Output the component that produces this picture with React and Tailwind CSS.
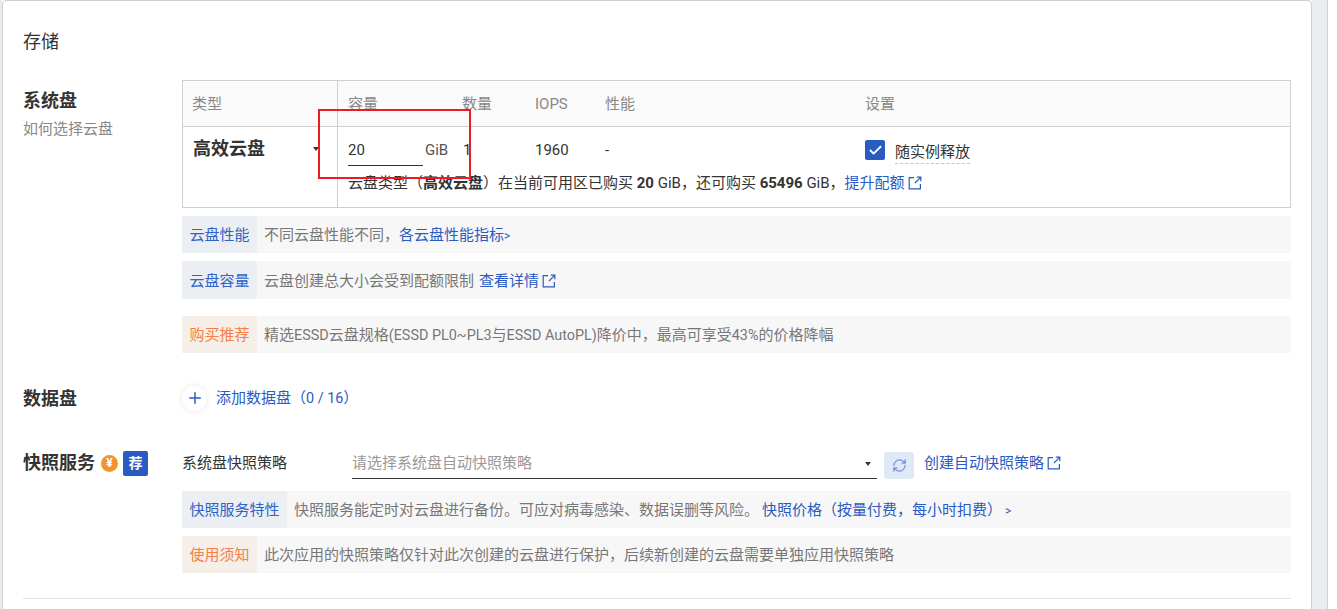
import React from "react";
import { Check, Plus, RefreshCw } from "lucide-react";

const Ext = ({ className = "" }) => (
  <svg viewBox="0 0 14 14" className={`w-[14px] h-[14px] inline-block ${className}`} fill="none" stroke="currentColor" strokeWidth="1.2">
    <path d="M6 1.6H1.2v11.2h11.2V8" />
    <path d="M7 7l5.6-5.6M8.8 1.2h4v4" />
  </svg>
);

const Caret = ({ className = "" }) => (
  <span className={`w-0 h-0 border-l-[3.5px] border-r-[3.5px] border-t-[4px] border-l-transparent border-r-transparent border-t-[#333] ${className}`} />
);

const Notice = ({ label, tone = "blue", h = "h-[37px]", w = "w-[75px]", children, className = "" }) => (
  <div className={`flex items-stretch bg-[#f7f7f7] ${h} ${className}`}>
    <div className={`${w} shrink-0 flex items-center justify-center pt-[2px] ${tone === "blue" ? "bg-[#ebeff3] text-[#2f63c9]" : "bg-[#f5eee9] text-[#f57f45]"}`}>{label}</div>
    <div className="pl-[7px] pt-[2px] flex items-center text-[#777]">{children}</div>
  </div>
);

const L = ({ children }) => <span className="text-[14.4px]">{children}</span>;

export default function App() {
  return (
    <div className="flex h-[609px] w-full overflow-hidden bg-white text-[15px] text-[#333]" style={{ fontFamily: 'Roboto, "Noto Sans CJK SC", sans-serif' }}>
      <div className="w-[2px] shrink-0 bg-[#ebecf0]" />
      <main className="w-[1310px] shrink-0 h-[640px] bg-white border border-[#d0d0d0] rounded-t-[4px] pl-[20px] pr-[19px]">
        <h2 className="text-[18px] leading-[24px] mt-[29px] text-[#333]">存储</h2>

        <section className="flex mt-[26px]">
          <div className="w-[159px] shrink-0 pt-[9px]">
            <div className="text-[18px] leading-[24px] font-bold">系统盘</div>
            <div className="text-[#888] leading-[20px] mt-[6px]">如何选择云盘</div>
          </div>
          <div className="w-[1109px]">
            <div className="border border-[#cfcfcf] h-[128px] flex">
              <div className="w-[155px] shrink-0 border-r border-[#cfcfcf]">
                <div className="h-[46px] bg-[#fafafa] border-b border-[#cfcfcf] pl-[9px] pt-[2px] flex items-center text-[#888]">类型</div>
                <div className="flex items-center justify-between pl-[10px] pr-[18px] pt-[9px]">
                  <span className="text-[18px] leading-[26px] font-bold">高效云盘</span>
                  <Caret />
                </div>
              </div>
              <div className="flex-1">
                <div className="h-[46px] bg-[#fafafa] border-b border-[#cfcfcf] pt-[2px] flex items-center text-[#888]">
                  <span className="pl-[10px] w-[124px]">容量</span>
                  <span className="w-[73px]">数量</span>
                  <span className="w-[70px]">IOPS</span>
                  <span className="w-[260px]">性能</span>
                  <span>设置</span>
                </div>
                <div className="flex items-start pt-[9px] leading-[28px]">
                  <div className="ml-[10px] w-[75px] h-[30px] border-b border-[#333]">20</div>
                  <span className="ml-[2px] w-[38px] text-[#555]">GiB</span>
                  <span className="w-[72px]">1</span>
                  <span className="w-[70px]">1960</span>
                  <span className="w-[260px]">-</span>
                  <span className="flex items-center">
                    <span className="w-[20px] h-[20px] rounded-[2px] bg-[#2a5bc3] flex items-center justify-center mr-[10px]"><Check size={15} strokeWidth={3} className="text-white" /></span>
                    <span className="h-[24px] leading-[24px] mt-[4px] border-b border-dashed border-[#c4c4c4]">随实例释放</span>
                  </span>
                </div>
                <div className="pl-[10px] leading-[20px] mt-[7px] flex items-center">
                  <span>云盘类型（<b>高效云盘</b>）在当前可用区已购买 <b>20</b> GiB，还可购买 <b>65496</b> GiB，</span>
                  <span className="text-[#2a5bc3]">提升配额</span>
                  <Ext className="ml-[3px] text-[#2a5bc3]" />
                </div>
              </div>
            </div>

            <Notice label="云盘性能" className="mt-[8px]">
              <span>不同云盘性能不同，</span>
              <span className="text-[#2a5bc3]">各云盘性能指标<span className="text-[12px]">&gt;</span></span>
            </Notice>
            <Notice label="云盘容量" h="h-[38px]" className="mt-[8px]">
              <span>云盘创建总大小会受到配额限制</span>
              <span className="text-[#2a5bc3] ml-[5px]">查看详情</span>
              <Ext className="ml-[3px] text-[#2a5bc3]" />
            </Notice>
            <Notice label="购买推荐" tone="orange" className="mt-[17px]">
              <span>精选<L>ESSD</L>云盘规格<L>(ESSD PL0~PL3</L>与<L>ESSD AutoPL)</L>降价中，最高可享受<L>43%</L>的价格降幅</span>
            </Notice>
          </div>
        </section>

        <section className="flex items-center mt-[32px] h-[26px]">
          <div className="w-[159px] shrink-0 text-[18px] font-bold leading-[24px] pt-[1px]">数据盘</div>
          <div className="flex items-center">
            <span className="w-[25px] h-[25px] rounded-full bg-white shadow-[0_0_6px_rgba(0,0,0,0.1)] flex items-center justify-center text-[#2a5bc3]"><Plus size={18} strokeWidth={2} /></span>
            <span className="ml-[9px] text-[#2a5bc3]">添加数据盘（<L>0 / 16</L>）</span>
          </div>
        </section>

        <section className="flex mt-[38px]">
          <div className="w-[159px] shrink-0 flex items-center h-[28px] self-start">
            <span className="text-[18px] font-bold leading-[24px] w-[70px] whitespace-nowrap">快照服务</span>
            <span className="ml-[8px] w-[17px] h-[17px] rounded-full bg-[#f39527] text-white text-[12px] leading-[17px] font-bold flex items-center justify-center">¥</span>
            <span className="ml-[5px] w-[25px] h-[25px] rounded-[2px] bg-[#2a5bc3] text-white text-[14px] font-bold flex items-center justify-center">荐</span>
          </div>
          <div className="w-[1109px]">
            <div className="flex items-center h-[28px]">
              <span className="w-[170px] shrink-0 text-[#333]">系统盘快照策略</span>
              <div className="w-[525px] h-[30px] mt-[2px] border-b border-[#333] flex items-center justify-between pr-[6px]">
                <span className="text-[#999]">请选择系统盘自动快照策略</span>
                <Caret />
              </div>
              <span className="ml-[7px] w-[30px] h-[27px] mt-[4px] rounded-[3px] bg-[#dfe8f7] flex items-center justify-center text-[#4a6cc0]"><RefreshCw size={15} strokeWidth={1.5} /></span>
              <span className="ml-[10px] text-[#2a5bc3]">创建自动快照策略</span>
              <Ext className="ml-[3px] text-[#2a5bc3]" />
            </div>
            <Notice label="快照服务特性" w="w-[105px]" className="mt-[14px]">
              <span>快照服务能定时对云盘进行备份。可应对病毒感染、数据误删等风险。</span>
              <span className="text-[#2a5bc3] ml-[3px]">快照价格（按量付费，每小时扣费）</span>
              <span className="ml-[3px] text-[12px] text-[#2a5bc3]">&gt;</span>
            </Notice>
            <Notice label="使用须知" tone="orange" className="mt-[8px]">
              此次应用的快照策略仅针对此次创建的云盘进行保护，后续新创建的云盘需要单独应用快照策略
            </Notice>
          </div>
        </section>

        <div className="mt-[25px] border-t border-[#e3e3e3] w-[1268px]" />
      </main>
      <div className="w-[16px] shrink-0 bg-[#ebecf0] border-r border-[#cfcfcf]" />
      <div className="absolute left-[318px] top-[109px] w-[153px] h-[70px] border-2 border-[#ed1c24]" />
    </div>
  );
}
